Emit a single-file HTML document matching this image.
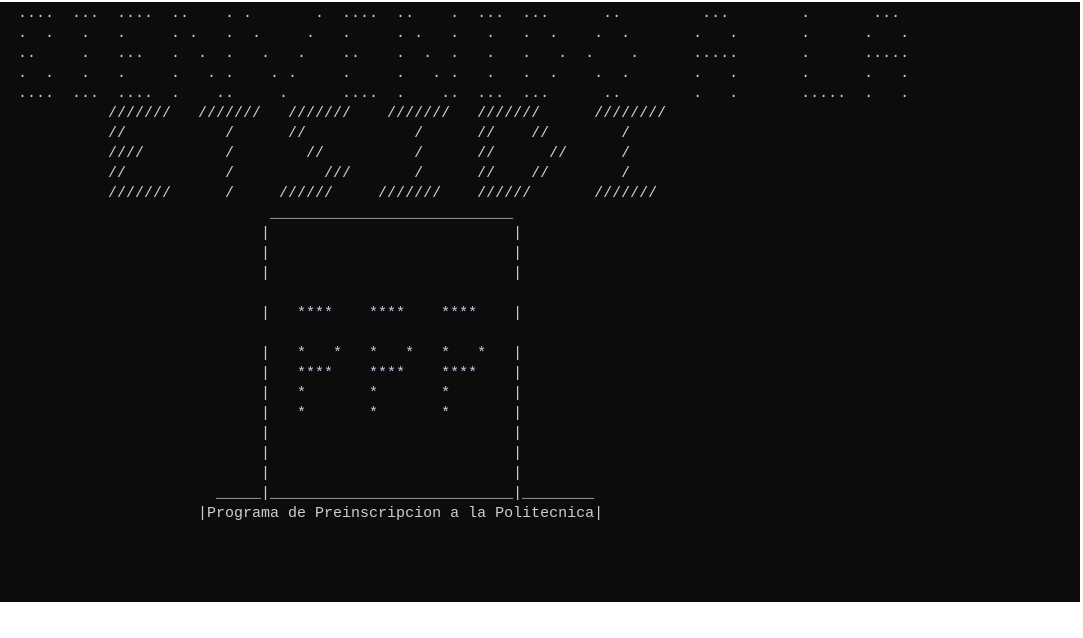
<!DOCTYPE html>
<html><head><meta charset="utf-8"><style>
html,body{margin:0;padding:0;background:#fff;width:1083px;height:638px;overflow:hidden}
#term{position:absolute;left:0;top:2px;width:1080px;height:600px;background:#0c0c0c}
pre{position:absolute;left:18px;top:2px;margin:0;font-family:"Liberation Mono",monospace;font-size:15px;line-height:20px;color:#cccccc;white-space:pre}
.s{color:#d2bde0}
</style></head><body>
<div id="term"><pre>....  ...  ....  ..    . .       .  ....  ..    .  ...  ...      ..         ...        .       ...
.  .   .   .     . .   .  .     .   .     . .   .   .   .  .    .  .       .   .       .      .   .
..     .   ...   .  .  .   .   .    ..    .  .  .   .   .   .  .    .      .....       .      .....
.  .   .   .     .   . .    . .     .     .   . .   .   .  .    .  .       .   .       .      .   .
....  ...  ....  .    ..     .      ....  .    ..  ...  ...      ..        .   .       .....  .   .
          ///////   ///////   ///////    ///////   ///////      ////////
          //           /      //            /      //    //        /
          ////         /        //          /      //      //      /
          //           /          ///       /      //    //        /
          ///////      /     //////     ///////    //////       ///////
                            ___________________________
                           |                           |
                           |                           |
                           |                           |

                           |   <span class="s">****    ****    ****</span>    |

                           |   <span class="s">*   *   *   *   *   *</span>   |
                           |   <span class="s">****    ****    ****</span>    |
                           |   <span class="s">*       *       *</span>       |
                           |   <span class="s">*       *       *</span>       |
                           |                           |
                           |                           |
                           |                           |
                      _____|___________________________|________
                    |Programa de Preinscripcion a la Politecnica|</pre></div>
</body></html>
